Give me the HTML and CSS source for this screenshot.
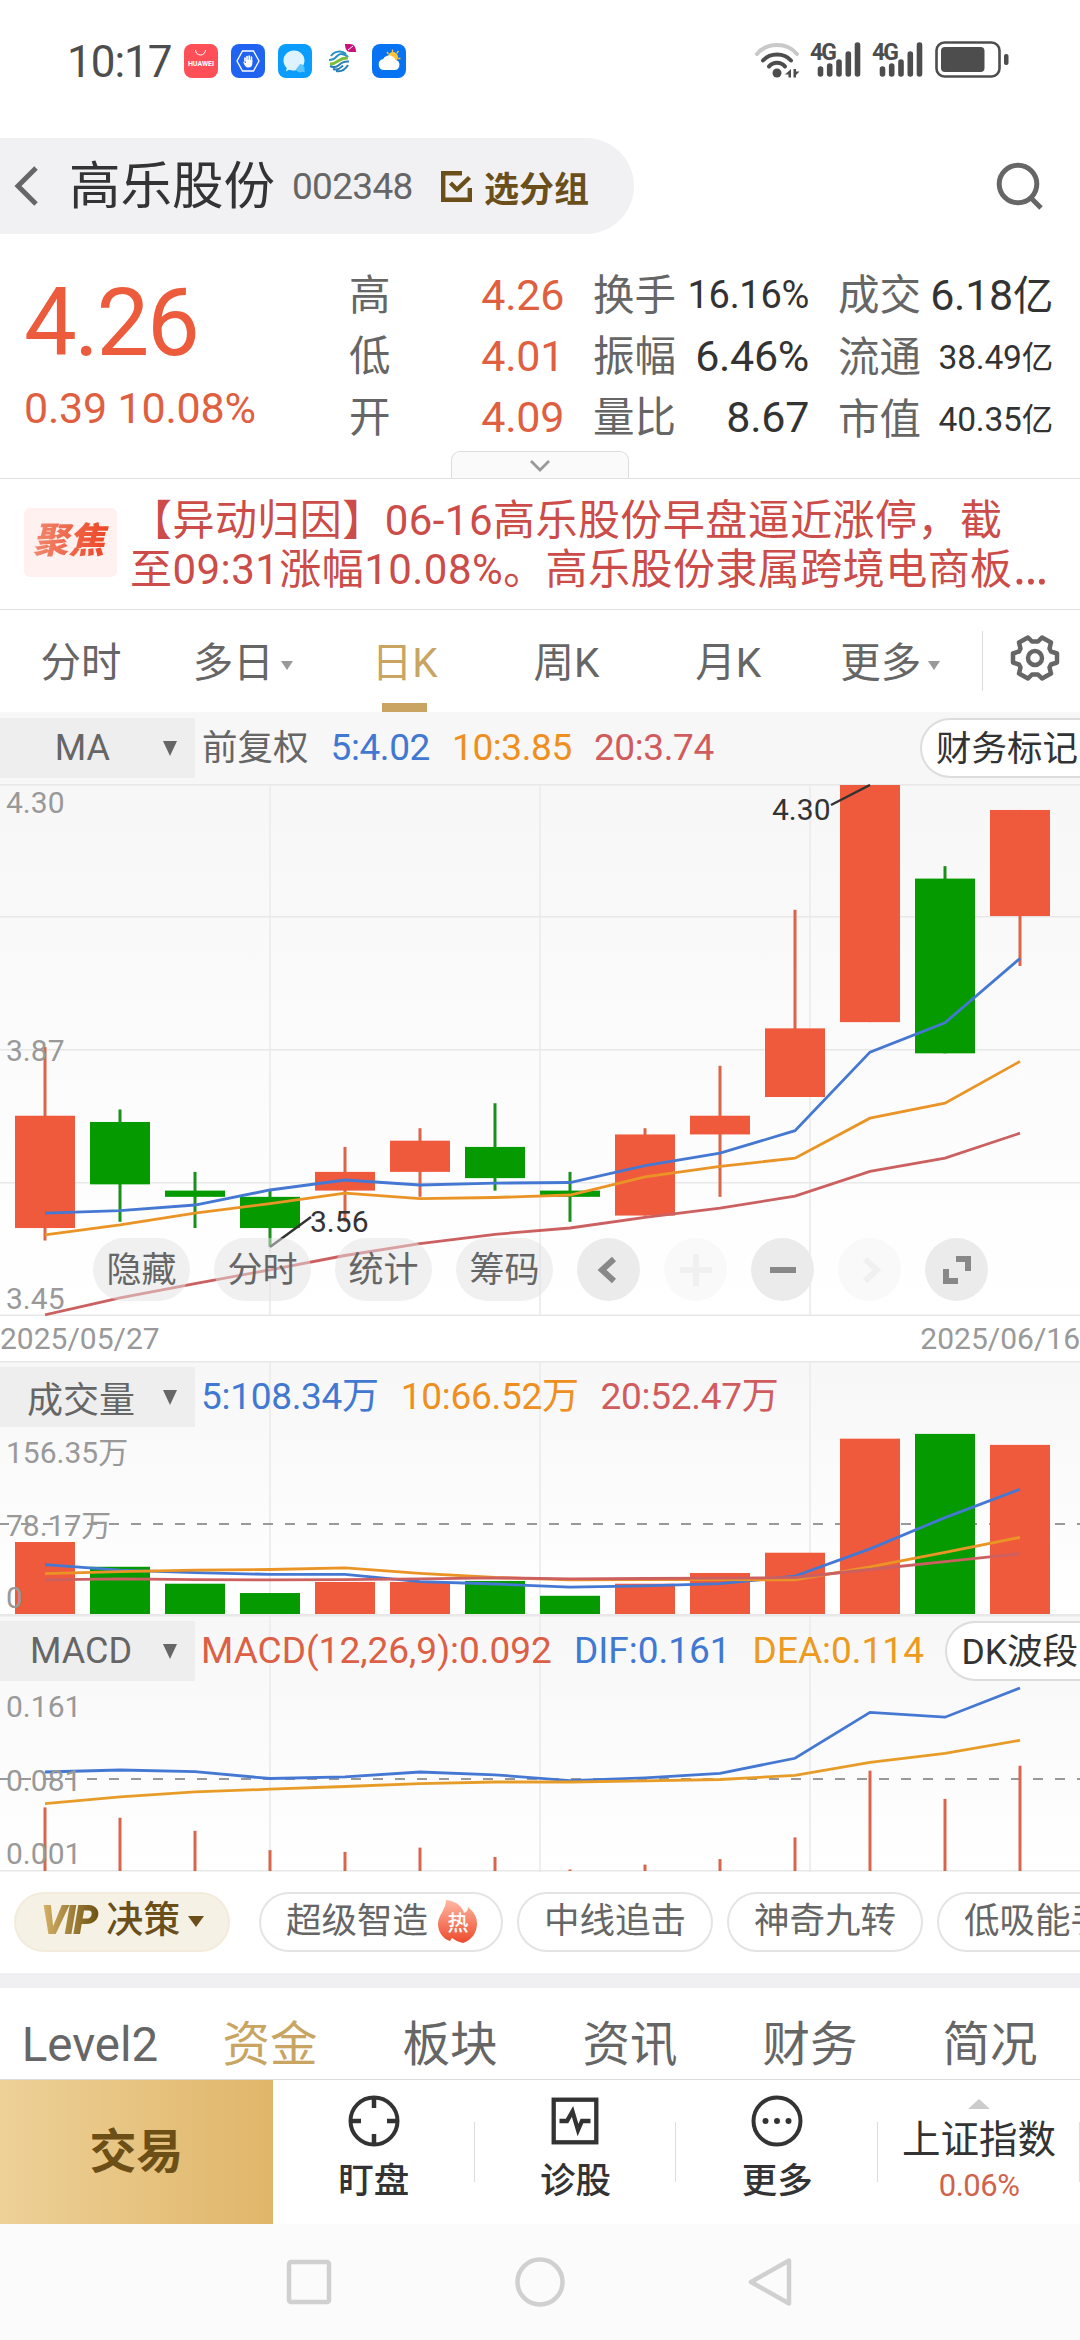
FILE: index.html
```html
<!DOCTYPE html>
<html lang="zh-CN">
<head>
  <meta charset="UTF-8">
  <meta name="viewport" content="width=device-width, initial-scale=1">
  <title>高乐股份 002348</title>
  <link rel="stylesheet" href="styles.css">
</head>
<body>

<div class="status-bar">
  <span class="time">10:17</span>
  <div class="app-icons">
    <svg width="34" height="34" viewBox="0 0 34 34">
      <rect width="34" height="34" rx="8" fill="#ff5059"/>
      <path d="M11.500 6a5 5 0 0 0 10 0" fill="none" stroke="#fff" stroke-width="1"/>
      <text x="17" y="22" class="huawei">HUAWEI</text>
    </svg>
    <svg width="34" height="34" viewBox="0 0 34 34">
      <rect width="34" height="34" rx="8" fill="#1f63f0"/>
      <path d="M11.500 7h11l5.500 10-5.500 10h-11L6 17z" fill="none" stroke="#fff" stroke-width="1.300"/>
      <path d="M14 17v-3M16 18v-5.500M18.200 18v-6M20.400 18v-5" stroke="#fff" stroke-width="1.700" stroke-linecap="round"/>
      <path d="M12 17.500l3 1.500v-3h6.300v4c0 2-1.500 3.500-4 3.500-2.800 0-4-2.500-5.300-6z" fill="#fff"/>
    </svg>
    <svg width="34" height="34" viewBox="0 0 34 34">
      <rect width="34" height="34" rx="8" fill="#0a9dfb"/>
      <path d="M16 6.500c6 0 10.500 4.500 10.500 10S22 26.500 16 26.500c-2 0-3.500-.3-5-.8L8 27.500l.7-3.600C6.500 22 5.500 19.500 5.500 16.500c0-5.500 4.500-10 10.500-10z" fill="#dff3ff"/>
      <path d="M22 20a5 5 0 0 1 4.500 6.500l.3 2-2-.8a5 5 0 0 1-7-2.200z" fill="#5cc4ff"/>
    </svg>
    <svg width="34" height="34" viewBox="0 0 34 34">
      <g fill="none" stroke-width="2">
        <path d="M6 12c3-5 11-6 15-2M4 16c8 0 7-6 12-6 3 0 5 1 7 3" stroke="#2b8fc4"/>
        <path d="M5 20c9 0 8-7 18-6" stroke="#7cbf3a" stroke-width="3"/>
        <path d="M5 22c2 1 6 2 9-1 3-3 5-4 10-3.500M8 25c6 2 8-2 10-3.500M11 27c5 1 9-1 12-6" stroke="#2b7fb8"/>
      </g>
      <path d="M20 0h5c4 0 6 3 6 8h-6c-3 0-5-3-5-8z" fill="#c8127c"/>
      <path d="M23 6l5-4" stroke="#fff"/>
    </svg>
    <svg width="34" height="34" viewBox="0 0 34 34">
      <rect width="34" height="34" rx="8" fill="#0673f2"/>
      <circle cx="21" cy="13" r="5" fill="#ffc53a"/>
      <path d="M20.500 5.500v3M15 8l1.500 2M26.500 7l-1.500 2M28.500 14.500h-2.500" stroke="#ffc53a" stroke-width="1.300"/>
      <path d="M12 26a5.500 5.500 0 0 1-.8-10.900 6.500 6.500 0 0 1 12 .6A5.200 5.200 0 0 1 22.500 26z" fill="#fff"/>
    </svg>
  </div>
  <div class="status-right">
    <svg width="46" height="36" viewBox="0 0 46 36" fill="none" stroke="#4d4d4d" stroke-linecap="round" stroke-width="4">
      <path d="M2 12C12 0 32 0 42 12" stroke="#c9c9c9"/>
      <path d="M8 18.500c7-8 21-8 28 0M14 24.500c4-5 12-5 16 0"/>
      <circle cx="22" cy="31" r="4.500" fill="#4d4d4d" stroke="none"/>
      <path d="M36 27v8.500h-2.500V32.500H30zM38.500 27H41v2.500h3.500L41 33v2.500h-2.500z" fill="#4d4d4d" stroke="none"/>
    </svg>
    <svg class="signal" width="52" height="36" viewBox="-2 0 52 36">
      <text x="-1" y="17.500" class="net">4G</text>
      <path d="M9.500 27v5M18.700 24v8M28 20v12M37.300 12v20M46.500 3v29" stroke="#4d4d4d" stroke-width="5.600" stroke-linecap="round"/>
    </svg>
    <svg class="signal" width="52" height="36" viewBox="-2 0 52 36">
      <text x="-1" y="17.500" class="net">4G</text>
      <path d="M9.500 27v5M18.700 24v8M28 20v12M37.300 12v20M46.500 3v29" stroke="#4d4d4d" stroke-width="5.600" stroke-linecap="round"/>
    </svg>
    <svg width="74" height="38" viewBox="0 0 74 38">
      <rect x="1.500" y="1.500" width="63" height="34" rx="8" fill="none" stroke="#4d4d4d" stroke-width="2.600"/>
      <rect x="6" y="6" width="43.500" height="25" rx="4" fill="#4d4d4d"/>
      <rect x="69" y="13" width="4.500" height="11" rx="2" fill="#4d4d4d"/>
    </svg>
  </div>
</div>

<header>
  <div class="stock-pill">
    <svg class="back" width="26" height="40" viewBox="0 0 26 40"><path d="M22 2L4 20l18 18" fill="none" stroke="#666" stroke-width="5"/></svg>
    <h1>高乐股份</h1>
    <span class="code">002348</span>
    <svg class="check" width="31" height="31" viewBox="0 0 31 31" fill="none" stroke="#6b4f1b" stroke-width="4.400">
      <path d="M21 2.200H2.200v26.600h26.600V17"/>
      <path d="M9.500 12l6.500 6.500L28.500 6.500"/>
    </svg>
    <span class="group">选分组</span>
  </div>
  <svg class="search" width="50" height="50" viewBox="0 0 50 50" fill="none" stroke="#666" stroke-width="5">
    <circle cx="22" cy="22" r="18.800"/>
    <path d="M35 36l10 10"/>
  </svg>
</header>

<section class="quote">
  <div class="price">
    <div class="last">4.26</div>
    <div class="change">0.39 10.08%</div>
  </div>
  <dl class="col col-price">
    <div><dt>高</dt><dd>4.26</dd></div>
    <div><dt>低</dt><dd>4.01</dd></div>
    <div><dt>开</dt><dd>4.09</dd></div>
  </dl>
  <dl class="col col-rate">
    <div><dt>换手</dt><dd class="mid">16.16%</dd></div>
    <div><dt>振幅</dt><dd>6.46%</dd></div>
    <div><dt>量比</dt><dd>8.67</dd></div>
  </dl>
  <dl class="col col-cap">
    <div><dt>成交</dt><dd>6.18<u>亿</u></dd></div>
    <div><dt>流通</dt><dd class="small">38.49<u>亿</u></dd></div>
    <div><dt>市值</dt><dd class="small">40.35<u>亿</u></dd></div>
  </dl>
  <div class="expand">
    <svg width="22" height="14" viewBox="0 0 22 14"><path d="M2 2l9 9 9-9" fill="none" stroke="#999" stroke-width="2.800"/></svg>
  </div>
</section>

<section class="news">
  <span class="badge"><b>聚焦</b></span>
  <p>【异动归因】06-16高乐股份早盘逼近涨停，截<br>至09:31涨幅10.08%。高乐股份隶属跨境电商板<span class="more">…</span></p>
</section>

<nav class="period">
  <a>分时</a>
  <a>多日<i></i></a>
  <a class="active">日K</a>
  <a>周K</a>
  <a>月K</a>
  <a>更多<i></i></a>
  <span class="gear">
    <svg width="50" height="50" viewBox="0 0 50 50" fill="none" stroke="#666" stroke-width="4.500" stroke-linejoin="round">
      <path d="M22 8.500h6l4-4 9 5-1.500 6 1.500 3 6 2v9l-6 2-1.500 3 1.500 6-9 5-4-4h-6l-4 4-9-5 1.500-6-1.500-3-6-2v-9l6-2 1.500-3-1.500-6 9-5z"/>
      <circle cx="25" cy="25" r="7"/>
    </svg>
  </span>
</nav>

<section class="panel-head">
  <span class="select">MA<i></i></span>
  <span class="fq">前复权</span>
  <span class="legend blue">5:4.02</span>
  <span class="legend orange">10:3.85</span>
  <span class="legend red">20:3.74</span>
  <span class="tag">财务标记</span>
</section>

<section class="panel k-panel">
  <svg id="kChart" width="1080" height="532"></svg>
  <div class="tools">
    <span>隐藏</span>
    <span>分时</span>
    <span>统计</span>
    <span>筹码</span>
    <b><svg width="30" height="30" viewBox="0 0 30 30"><path d="M20 4L8 15l12 11" fill="none" stroke="#888" stroke-width="6"/></svg></b>
    <b class="off"><svg width="32" height="32" viewBox="0 0 32 32"><path d="M16 0v32M0 16h32" stroke="#f0f0f0" stroke-width="6"/></svg></b>
    <b><svg width="26" height="30" viewBox="0 0 26 30"><path d="M0 15h26" stroke="#888" stroke-width="6"/></svg></b>
    <b class="off"><svg width="30" height="30" viewBox="0 0 30 30"><path d="M10 4l12 11-12 11" fill="none" stroke="#f0f0f0" stroke-width="6"/></svg></b>
    <b><svg width="30" height="30" viewBox="0 0 30 30"><path d="M14 4h12v12M4 14v12h12" fill="none" stroke="#888" stroke-width="6"/></svg></b>
  </div>
</section>

<div class="dates"><span>2025/05/27</span><span>2025/06/16</span></div>

<section class="panel">
  <svg id="volChart" width="1080" height="254"></svg>
  <div class="overlay">
    <span class="select">成交量<i></i></span>
    <span class="legend blue">5:108.34万</span>
    <span class="legend orange">10:66.52万</span>
    <span class="legend red">20:52.47万</span>
  </div>
</section>

<section class="panel">
  <svg id="macdChart" width="1080" height="257"></svg>
  <div class="overlay wide">
    <span class="select">MACD<i></i></span>
    <span class="legend macd">MACD(12,26,9):0.092</span>
    <span class="legend blue">DIF:0.161</span>
    <span class="legend amber">DEA:0.114</span>
    <span class="tag">DK波段</span>
  </div>
</section>

<section class="strategy">
  <span class="vip"><em>VIP</em>决策<i></i></span>
  <span>超级智造
    <svg width="40" height="43" viewBox="0 0 40 43">
      <defs>
        <linearGradient id="fire" x1="0" y1="0" x2="0" y2="1">
          <stop offset="0" stop-color="#ffb9a4"/>
          <stop offset="1" stop-color="#ec4a2c"/>
        </linearGradient>
      </defs>
      <path d="M8 0c10 1 16 6 18 13 3-1 4-3 4-6 6 5 9 10 9 17 0 8-5 16-14 19-5-1-8-3-11-5l-2 3C5 39 0 32 0 24 0 15 8 10 8 0z" fill="url(#fire)"/>
      <text x="20" y="30" class="hot">热</text>
    </svg>
  </span>
  <span>中线追击</span>
  <span>神奇九转</span>
  <span>低吸能手</span>
</section>

<nav class="info-tabs">
  <a>Level2</a>
  <a class="active">资金</a>
  <a>板块</a>
  <a>资讯</a>
  <a>财务</a>
  <a>简况</a>
</nav>

<footer class="bottom-bar">
  <div class="trade">交易</div>
  <div class="item">
    <svg width="52" height="52" viewBox="0 0 52 52" fill="none" stroke="#333" stroke-width="4">
      <circle cx="26" cy="26" r="23.500"/>
      <path d="M26 2v11M26 39v11M2 26h11M39 26h11" stroke-width="4.500"/>
    </svg>
    <span>盯盘</span>
  </div>
  <div class="item">
    <svg width="52" height="52" viewBox="0 0 52 52" fill="none" stroke="#333" stroke-width="4.300">
      <rect x="4.700" y="4.700" width="42.600" height="42.600"/>
      <path d="M10.500 26H18l5.500-9.500L29 35l4-9h8.500"/>
    </svg>
    <span>诊股</span>
  </div>
  <div class="item">
    <svg width="52" height="52" viewBox="0 0 52 52">
      <circle cx="26" cy="26" r="23.500" fill="none" stroke="#333" stroke-width="4"/>
      <g fill="#333"><circle cx="14.500" cy="26" r="3"/><circle cx="26" cy="26" r="3"/><circle cx="37.500" cy="26" r="3"/></g>
    </svg>
    <span>更多</span>
  </div>
  <div class="item index">
    <i></i>
    <span>上证指数</span>
    <small>0.06%</small>
  </div>
</footer>

<div class="nav-bar">
  <svg width="50" height="50" viewBox="0 0 50 50"><rect x="5" y="5" width="40" height="40" rx="2"/></svg>
  <svg width="50" height="50" viewBox="0 0 50 50"><circle cx="25" cy="25" r="22.500"/></svg>
  <svg width="50" height="50" viewBox="0 0 50 50"><path d="M43 3.500v43L5 25z"/></svg>
</div>

<script>
  const RED = '#f05a3c';
  const GREEN = '#049a00';
  const STEP = 75;
  const FIRST = 45;

  // [body top, body bottom, high, low, up]
  const candles = [
    [3.77, 3.59, 3.88, 3.57, 1],
    [3.76, 3.66, 3.78, 3.60, 0],
    [3.65, 3.64, 3.68, 3.59, 0],
    [3.64, 3.59, 3.65, 3.56, 0],
    [3.68, 3.65, 3.72, 3.60, 1],
    [3.73, 3.68, 3.75, 3.64, 1],
    [3.72, 3.67, 3.79, 3.65, 0],
    [3.65, 3.64, 3.68, 3.60, 0],
    [3.74, 3.61, 3.75, 3.61, 1],
    [3.77, 3.74, 3.85, 3.64, 1],
    [3.91, 3.80, 4.10, 3.80, 1],
    [4.30, 3.92, 4.30, 3.92, 1],
    [4.15, 3.87, 4.17, 3.87, 0],
    [4.26, 4.09, 4.26, 4.01, 1]
  ];
  const ma5 = [3.614, 3.618, 3.627, 3.651, 3.667, 3.659, 3.662, 3.663, 3.690, 3.710, 3.746, 3.872, 3.919, 4.022];
  const ma10 = [3.579, 3.595, 3.614, 3.629, 3.646, 3.637, 3.639, 3.643, 3.672, 3.689, 3.702, 3.766, 3.790, 3.857];
  const ma20 = [3.451, 3.478, 3.501, 3.523, 3.546, 3.565, 3.580, 3.590, 3.607, 3.622, 3.641, 3.681, 3.702, 3.742];

  const vol = [62.5, 41, 26.3, 18.2, 27.8, 27.8, 28.7, 15.8, 26.3, 35.6, 53.2, 152.2, 156.35, 146.8];
  const vol5 = [42.8, 38, 35.9, 34.4, 34.4, 28.1, 26, 23.3, 24.5, 26.3, 32.9, 56.5, 83.7, 108.34];
  const vol10 = [35, 36.8, 38, 38.6, 40.1, 35.3, 31.7, 29.6, 29.9, 29.9, 29.6, 41, 53.5, 66.52];
  const vol20 = [29.6, 30.5, 29.9, 29.6, 29.9, 30.5, 31.4, 30.5, 30.8, 31.1, 31.7, 38.6, 45.4, 52.47];

  const dif = [.0871, .0889, .0874, .0814, .0829, .0871, .0847, .0796, .0820, .0859, .0992, .1395, .1353, .161];
  const dea = [.0593, .0653, .0696, .0720, .0744, .0768, .0783, .0783, .0793, .0805, .0841, .0956, .1035, .115];
  const macd = [.0560, .0469, .0354, .0184, .0169, .0206, .0124, .0014, .0057, .0105, .0296, .0883, .0635, .0926];

  const cx = i => FIRST + i * STEP;
  const rect = (x, y, w, h, color) => `<rect x="${x}" y="${y}" width="${w}" height="${h}" fill="${color}"/>`;
  const label = (x, y, text, cls = 'axis') => `<text x="${x}" y="${y}" class="${cls}">${text}</text>`;

  function line(data, y, color) {
    const points = data.map((v, i) => `${cx(i)},${y(v).toFixed(1)}`).join(' ');
    return `<polyline points="${points}" fill="none" stroke="${color}" stroke-width="2.8"/>`;
  }

  function grid(height, rows) {
    let out = '';
    [270, 540, 810].forEach(x => out += rect(x - 1, 0, 2, height, '#eeeeee'));
    rows.forEach(y => out += rect(0, y, 1080, 1.5, '#e8e8e8'));
    return out;
  }

  function dashed(y) {
    return `<path d="M-1 ${y}H1080" stroke="#999" stroke-width="2" stroke-dasharray="10 12"/>`;
  }

  function drawK() {
    const y = p => 1 + (4.30 - p) * 624;
    let out = grid(532, [0, 132, 265, 398, 530.5]);
    candles.forEach(([top, bottom, high, low, up], i) => {
      const color = up ? RED : GREEN;
      out += rect(cx(i) - 1.5, y(high), 3, y(low) - y(high), up ? '#dc6448' : '#1a8f1a');
      out += rect(cx(i) - 30, y(top), 60, y(bottom) - y(top), color);
    });
    out += line(ma20, y, '#cc6060') + line(ma10, y, '#eb9426') + line(ma5, y, '#4478d2');
    out += '<path d="M270 463L311 433M831 21L870 1" stroke="#333" stroke-width="2.5"/>';
    out += label(6, 29, '4.30') + label(6, 277, '3.87') + label(6, 525, '3.45');
    out += label(310, 448, '3.56', 'mark') + label(772, 36, '4.30', 'mark');
    document.getElementById('kChart').innerHTML = out;
  }

  function drawVolume() {
    const y = v => 253 - v * 1.152;
    let out = grid(254, [0, 253]) + dashed(163);
    vol.forEach((v, i) => out += rect(cx(i) - 30, y(v), 60, 253 - y(v), candles[i][4] ? RED : GREEN));
    out += line(vol5, y, '#4478d2') + line(vol10, y, '#eb9426') + line(vol20, y, '#cc6060');
    out += label(6, 102, '156.35万') + label(6, 175, '78.17万') + label(6, 247, '0');
    document.getElementById('volChart').innerHTML = out;
  }

  function drawMacd() {
    const y = v => 73 + (.161 - v) * 1137;
    let out = grid(257, [0, 255]) + dashed(164);
    macd.forEach((v, i) => out += rect(cx(i) - 1.5, y(v), 3, 256 - y(v), '#d8664c'));
    out += line(dif, y, '#4478d2') + line(dea, y, '#e89c28');
    out += label(6, 102, '0.161') + label(6, 176, '0.081') + label(6, 249, '0.001');
    document.getElementById('macdChart').innerHTML = out;
  }

  drawK();
  drawVolume();
  drawMacd();
</script>

</body>
</html>
```

FILE: styles.css
```css
* {
  margin: 0;
  padding: 0;
  box-sizing: border-box;
}

body {
  width: 1080px;
  height: 2340px;
  overflow: hidden;
  font-family: Roboto, 'Noto Sans CJK SC', sans-serif;
  background-color: #fff;
  color: #666;
  white-space: nowrap;
}

svg {
  display: block;
  flex: none;
}

/* Status bar */
.status-bar {
  height: 138px;
  padding: 41px 71px 0 67px;
  display: flex;
  align-items: flex-start;
}

.time {
  width: 117px;
  font-size: 44px;
  line-height: 42px;
  letter-spacing: -1px;
  color: #4d4d4d;
}

.app-icons {
  display: flex;
  gap: 13px;
  padding-top: 3px;
}

.huawei {
  font-size: 7px;
  font-weight: 700;
  fill: #fff;
  text-anchor: middle;
}

.status-right {
  display: flex;
  margin-left: auto;
}

.status-right svg {
  margin-top: 1px;
}

.status-right .signal {
  margin-left: 8px;
  margin-right: 2px;
}

.status-right svg:last-child {
  margin: 0 0 0 10px;
}

.net {
  font-size: 23px;
  font-weight: 700;
  letter-spacing: -2px;
  fill: #4d4d4d;
}

/* Header */
header {
  height: 96px;
  display: flex;
  justify-content: space-between;
}

.stock-pill {
  width: 634px;
  height: 96px;
  padding-left: 14px;
  display: flex;
  align-items: center;
  background-color: #f1f1f4;
  border-radius: 0 48px 48px 0;
}

header h1 {
  margin-left: 29px;
  padding-top: 2px;
  font-size: 51.500px;
  line-height: 94px;
  font-weight: 400;
  color: #333;
}

.code {
  width: 150px;
  margin-left: 17px;
  font-size: 37px;
  letter-spacing: -0.7px;
}

.check {
  margin-left: -1px;
}

.group {
  margin-left: 12px;
  font-size: 35px;
  font-weight: 700;
  color: #6b4f1b;
}

.search {
  margin: 24px 34px 0 0;
}

/* Quote */
.quote {
  position: relative;
  height: 245px;
  padding: 31px 27px 0 24px;
  display: flex;
  border-bottom: 1.500px solid #e2e2e2;
}

.price {
  width: 325px;
  color: #ec5b3c;
}

.last {
  margin-top: 8px;
  font-size: 94px;
  line-height: 100px;
  letter-spacing: -2.500px;
}

.change {
  margin-top: 8px;
  font-size: 43px;
  line-height: 54px;
  letter-spacing: -0.200px;
  color: #df6041;
}

.col {
  font-size: 41.500px;
  line-height: 61px;
}

.col div {
  display: flex;
  justify-content: space-between;
}

.col dd {
  font-size: 43px;
  letter-spacing: -0.300px;
  color: #333;
}

.col .mid {
  font-size: 38px;
}

.col .small {
  font-size: 33.500px;
  letter-spacing: -0.200px;
}

.col u {
  font-size: 0.940em;
  text-decoration: none;
}

.col-price {
  width: 215px;
}

.col-price dd {
  color: #df6041;
}

.col-rate {
  width: 216px;
  margin-left: 29px;
}

.col-cap {
  width: 215px;
  margin-left: 29px;
}

.expand {
  position: absolute;
  left: 451px;
  bottom: 0;
  width: 178px;
  height: 27px;
  padding-top: 7px;
  display: flex;
  justify-content: center;
  background-color: #fafafa;
  border: 1.500px solid #ddd;
  border-bottom: none;
  border-radius: 9px 9px 0 0;
}

/* News */
.news {
  height: 131px;
  padding: 17px 0 0 24px;
  display: flex;
  border-bottom: 1.500px solid #e2e2e2;
}

.badge {
  width: 93px;
  height: 69px;
  margin: 12px 13px 0 0;
  border-radius: 6px;
  background-color: #fef1ef;
  text-align: center;
  line-height: 67px;
}

.badge b {
  padding-right: 4px;
  font-size: 36px;
  font-weight: 900;
  font-style: italic;
  background: linear-gradient(90deg, #f08a70, #ee4424);
  -webkit-background-clip: text;
  color: transparent;
}

.news p {
  font-size: 42px;
  line-height: 49px;
  letter-spacing: 0.450px;
  color: #cb4c48;
}

.more {
  font-size: 54px;
  line-height: 1px;
}

/* Period tabs */
.period {
  position: relative;
  height: 102px;
  display: flex;
  font-size: 40.500px;
  line-height: 106px;
}

.period a {
  position: relative;
  width: 162px;
  text-align: center;
}

.period a i {
  display: inline-block;
  margin-left: 7px;
  vertical-align: 7px;
  border: 6px solid transparent;
  border-top: 9px solid #999;
  border-bottom: none;
}

.period .active {
  color: #c8a562;
}

.period .active::after {
  content: '';
  position: absolute;
  left: 58px;
  bottom: 0;
  width: 45px;
  height: 9px;
  background-color: #c9a462;
}

.gear {
  width: 98px;
  height: 60px;
  margin: 21px 0 0 11px;
  padding: 2px 0 0 27px;
  border-left: 1.500px solid #ddd;
}

/* Chart legends */
.panel-head {
  height: 72px;
  padding-top: 6px;
  display: flex;
  align-items: flex-start;
  background-color: #f7f7f7;
}

.select {
  width: 195px;
  height: 60px;
  padding-right: 18px;
  display: flex;
  flex: none;
  align-items: center;
  justify-content: flex-end;
  background-color: #eee;
  font-size: 36px;
}

.select i {
  margin-left: 28px;
  border: 7.500px solid transparent;
  border-top: 15px solid #666;
  border-bottom: none;
}

.wide .select i {
  margin-left: 31px;
}

.panel-head .select i {
  margin-left: 53px;
}

.fq {
  margin-left: 7px;
  font-size: 35.500px;
  line-height: 60px;
}

.legend {
  margin-left: 22px;
  font-size: 37px;
  line-height: 59px;
  letter-spacing: -0.400px;
}

.overlay .legend {
  letter-spacing: -0.300px;
}

.wide .legend {
  margin-left: 22px;
  letter-spacing: 0;
}

.overlay .select + .legend {
  margin-left: 6px;
}

.blue { color: #4078d2; }
.orange { color: #ee8f20; }
.red { color: #d05c5e; }
.macd { color: #dc6045; }
.amber { color: #ec9a20; }

.tag {
  height: 60px;
  margin-left: auto;
  padding: 0 2px 0 14px;
  border: 2px solid #ddd;
  border-right: none;
  border-radius: 30px 0 0 30px;
  background-color: #fff;
  font-size: 35.500px;
  line-height: 58px;
  color: #333;
}

/* Charts */
.panel {
  display: grid;
  background: linear-gradient(#f7f7f7, #fff);
}

.panel > * {
  grid-area: 1 / 1;
}

.overlay {
  padding-top: 6px;
  display: flex;
  align-items: flex-start;
}

.axis {
  font-size: 30px;
  fill: #999;
}

.mark {
  font-size: 30px;
  fill: #333;
}

.tools {
  align-self: end;
  display: flex;
  gap: 24px;
  padding: 0 0 15px 93px;
}

.tools span {
  width: 97px;
  height: 63px;
  border-radius: 32px;
  background-color: rgba(225, 225, 225, 0.5);
  font-size: 35px;
  line-height: 65px;
  text-align: center;
}

.tools b {
  width: 63px;
  height: 63px;
  display: flex;
  align-items: center;
  justify-content: center;
  border-radius: 50%;
  background-color: #ebebeb;
}

.tools .off {
  background-color: #f9f9f9;
}

.dates {
  height: 45px;
  display: flex;
  justify-content: space-between;
  font-size: 30px;
  line-height: 46px;
  color: #999;
}

/* Strategy chips */
.strategy {
  height: 116px;
  padding: 20px 0 0 14px;
  display: flex;
  gap: 14px;
  border-bottom: 15px solid #f0f0f3;
}

.strategy span {
  height: 60px;
  padding: 0 25px;
  display: flex;
  flex: none;
  align-items: center;
  border: 2px solid #e4e4e4;
  border-radius: 30px;
  font-size: 35.500px;
  line-height: 52px;
  padding-bottom: 2px;
}

.strategy span svg {
  margin-left: 10px;
  margin-right: -2px;
}

.strategy .vip {
  width: 216px;
  margin-right: 15px;
  border-color: #f3ecdc;
  background-color: #f6f1e5;
  font-size: 37px;
  font-weight: 500;
  color: #6b4f1b;
}

.vip em {
  margin-right: 6px;
  padding-right: 4px;
  font-size: 40px;
  font-weight: 900;
  letter-spacing: -2.500px;
  background: linear-gradient(90deg, #d9b468, #6b4f10);
  -webkit-background-clip: text;
  color: transparent;
}

.vip i {
  margin-left: 8px;
  border: 8px solid transparent;
  border-top: 11px solid #6b4f1b;
  border-bottom: none;
}

.hot {
  font-size: 21px;
  font-weight: 500;
  fill: #fff;
  text-anchor: middle;
}

/* Info tabs */
.info-tabs {
  height: 92px;
  display: flex;
  border-bottom: 1.500px solid #ddd;
  font-size: 47.500px;
  line-height: 115px;
}

.info-tabs a {
  width: 180px;
  text-align: center;
}

.info-tabs .active {
  color: #c8a562;
}

/* Bottom bar */
.bottom-bar {
  height: 144px;
  display: flex;
}

.trade {
  width: 273px;
  background: linear-gradient(90deg, #edd198, #e0b669);
  font-size: 47px;
  font-weight: 700;
  line-height: 144px;
  text-align: center;
  color: #6b4f16;
}

.item {
  position: relative;
  width: 202px;
  padding-top: 15px;
  display: flex;
  flex-direction: column;
  align-items: center;
  color: #333;
}

.item::after {
  content: '';
  position: absolute;
  right: 0;
  top: 42px;
  width: 1px;
  height: 60px;
  background-color: #ddd;
}

.item span {
  margin-top: 11px;
  font-size: 35.500px;
  font-weight: 500;
  line-height: 46px;
}

.index i {
  margin-top: 4px;
  border: 11px solid transparent;
  border-top: none;
  border-bottom: 10px solid #ccc;
}

.index span {
  margin-top: 6px;
  font-size: 38.500px;
  font-weight: 400;
  line-height: 50px;
}

.index small {
  margin-top: 1px;
  font-size: 31px;
  line-height: 40px;
  letter-spacing: -0.500px;
  color: #d0634c;
}

/* System navigation */
.nav-bar {
  height: 116px;
  padding: 0 284px;
  display: flex;
  align-items: center;
  justify-content: space-between;
  background-color: #fbfbfb;
}

.nav-bar svg {
  fill: none;
  stroke: #d0d0d0;
  stroke-width: 4.500;
  stroke-linejoin: round;
}
```
